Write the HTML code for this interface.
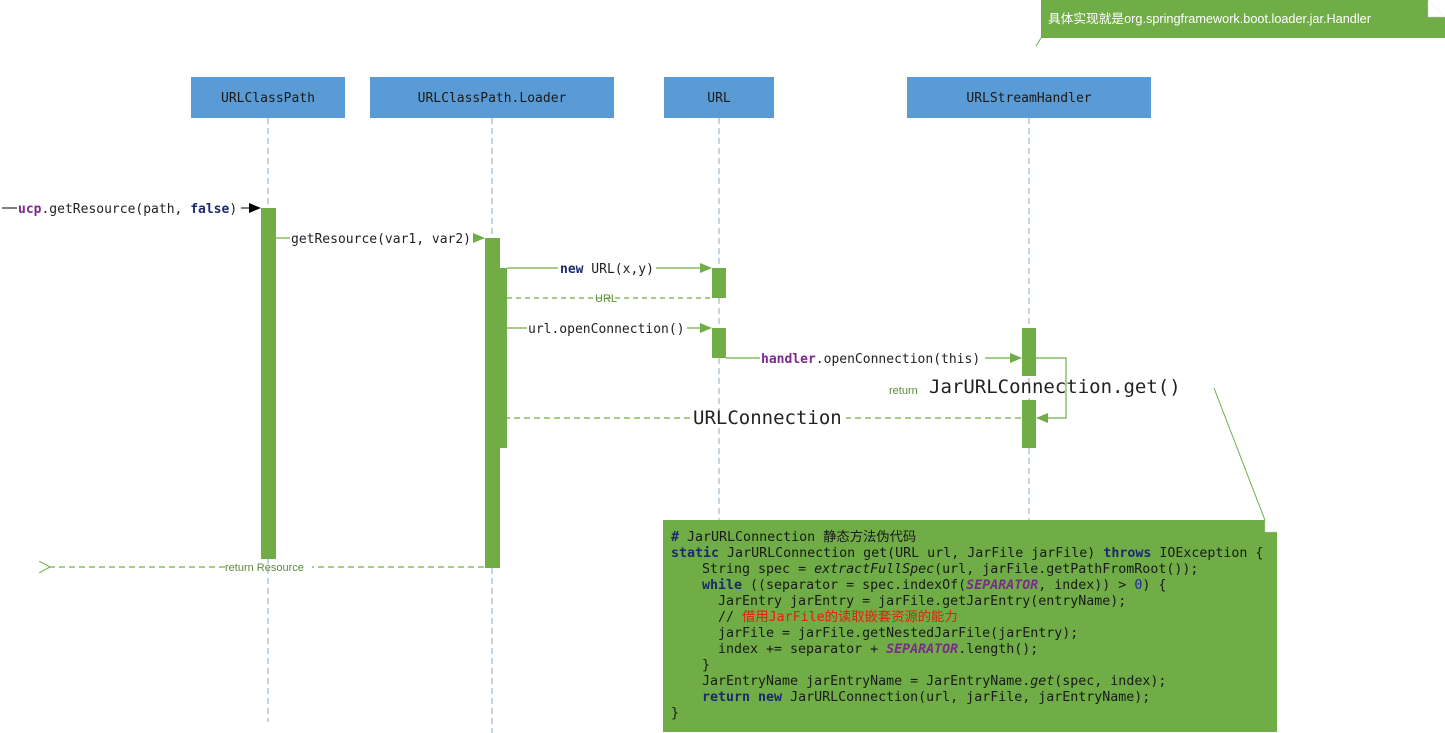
<!DOCTYPE html>
<html><head><meta charset="utf-8"><style>
body{margin:0;background:#fff;width:1445px;height:733px;overflow:hidden}
svg{display:block}
.m{font-family:"DejaVu Sans Mono","Liberation Mono","Noto Sans CJK SC",monospace}
.s{font-family:"Liberation Sans","Noto Sans CJK SC",sans-serif}
.pre text{white-space:pre}
</style></head><body>
<svg width="1445" height="733" xmlns="http://www.w3.org/2000/svg">
<defs>
<marker id="a" markerWidth="12" markerHeight="10" refX="11" refY="5" orient="auto" markerUnits="userSpaceOnUse"><path d="M0,0L12,5L0,10z" fill="#70ad47"/></marker>
<marker id="k" markerWidth="12" markerHeight="10" refX="11" refY="5" orient="auto" markerUnits="userSpaceOnUse"><path d="M0,0L12,5L0,10z" fill="#000"/></marker>
<marker id="o" markerWidth="12" markerHeight="12" refX="1" refY="6" orient="auto" markerUnits="userSpaceOnUse"><path d="M12,0L1,6L12,12" fill="none" stroke="#70ad47"/></marker>
</defs>
<g stroke="#8aa9c0" stroke-dasharray="6,4" stroke-width="1">
<line x1="268" y1="118" x2="268" y2="722"/><line x1="492" y1="118" x2="492" y2="733"/>
<line x1="719" y1="118" x2="719" y2="520"/><line x1="1029" y1="118" x2="1029" y2="520"/>
</g>
<g fill="#5b9bd5">
<rect x="191" y="77" width="154" height="41"/><rect x="370" y="77" width="244" height="41"/>
<rect x="664" y="77" width="110" height="41"/><rect x="907" y="77" width="244" height="41"/>
</g>
<g class="m" font-size="13" fill="#1a1a1a" text-anchor="middle">
<text x="268" y="102">URLClassPath</text><text x="492" y="102">URLClassPath.Loader</text>
<text x="719" y="102">URL</text><text x="1029" y="102">URLStreamHandler</text>
</g>
<g fill="#70ad47">
<rect x="261" y="208" width="15" height="351"/>
<rect x="485" y="238" width="15" height="330"/>
<rect x="492" y="268" width="15" height="180"/>
<rect x="712" y="268" width="14" height="30"/>
<rect x="712" y="328" width="14" height="30"/>
<rect x="1022" y="328" width="14" height="48"/>
<rect x="1022" y="400" width="14" height="48"/>
</g>
<g stroke="#70ad47" fill="none" stroke-width="1.2">
<line x1="276" y1="238" x2="290" y2="238"/><line x1="474" y1="238" x2="484" y2="238" marker-end="url(#a)"/>
<line x1="507" y1="268" x2="558" y2="268"/><line x1="656" y1="268" x2="711" y2="268" marker-end="url(#a)"/>
<line x1="710" y1="298" x2="502" y2="298" stroke-dasharray="5,4" marker-end="url(#o)"/>
<line x1="507" y1="328" x2="527" y2="328"/><line x1="687" y1="328" x2="711" y2="328" marker-end="url(#a)"/>
<line x1="726" y1="358" x2="760" y2="358"/><line x1="985" y1="358" x2="1021" y2="358" marker-end="url(#a)"/>
<polyline points="1036,358 1066,358 1066,418 1037,418" marker-end="url(#a)"/>
<line x1="1021" y1="418" x2="846" y2="418" stroke-dasharray="6,4"/>
<line x1="690" y1="418" x2="506" y2="418" stroke-dasharray="6,4" marker-end="url(#o)"/>
<line x1="484" y1="567" x2="312" y2="567" stroke-dasharray="6,4"/>
<line x1="225" y1="567" x2="50" y2="567" stroke-dasharray="6,4" marker-end="url(#o)"/>
</g>
<line x1="2" y1="208" x2="17" y2="208" stroke="#000"/>
<line x1="241" y1="208" x2="260" y2="208" stroke="#000" marker-end="url(#k)"/>
<g class="m" font-size="13" fill="#222">
<text x="18" y="213"><tspan fill="#7a2b8c" font-weight="bold">ucp</tspan>.getResource(path, <tspan fill="#1a2a6e" font-weight="bold">false</tspan>)</text>
<text x="291" y="243">getResource(var1, var2)</text>
<text x="560" y="273"><tspan fill="#1a2a6e" font-weight="bold">new</tspan> URL(x,y)</text>
<text x="528" y="333">url.openConnection()</text>
<text x="761" y="363"><tspan fill="#7a2b8c" font-weight="bold">handler</tspan>.openConnection(this)</text>
<text x="929" y="393" font-size="19">JarURLConnection.get()</text>
<text x="693" y="424" font-size="19">URLConnection</text>
</g>
<g class="s" font-size="11" fill="#5a8a3a">
<text x="595" y="302">URL</text><text x="889" y="394">return</text><text x="225" y="571">return Resource</text>
</g>
<path d="M1041,0H1428L1445,17V38H1041Z" fill="#70ad47"/>
<path d="M1428,0V17H1445" fill="#fff" stroke="#ccc" stroke-width="0.5"/>
<line x1="1041" y1="38" x2="1036" y2="46" stroke="#70ad47"/>
<text x="1048" y="23" class="s" font-size="12.7" fill="#fff">具体实现就是org.springframework.boot.loader.jar.Handler</text>
<line x1="1214" y1="388" x2="1268" y2="528" stroke="#70ad47"/>
<path d="M663,520H1265L1277,532V732H663Z" fill="#70ad47"/>
<path d="M1265,520V532H1277" fill="#fff" stroke="#ccc" stroke-width="0.5"/>
<g class="m pre" font-size="13.3" fill="#1a1a1a">
<text x="671" y="541"><tspan fill="#1a2a6e" font-weight="bold">#</tspan> JarURLConnection 静态方法伪代码</text>
<text x="671" y="557"><tspan fill="#1a2a6e" font-weight="bold">static</tspan> JarURLConnection get(URL url, JarFile jarFile) <tspan fill="#1a2a6e" font-weight="bold">throws</tspan> IOException {</text>
<text x="702" y="573">String spec = <tspan font-style="italic">extractFullSpec</tspan>(url, jarFile.getPathFromRoot());</text>
<text x="702" y="589"><tspan fill="#1a2a6e" font-weight="bold">while</tspan> ((separator = spec.indexOf(<tspan fill="#7a2b8c" font-style="italic" font-weight="bold">SEPARATOR</tspan>, index)) &gt; <tspan fill="#1a2a9e">0</tspan>) {</text>
<text x="718" y="605">JarEntry jarEntry = jarFile.getJarEntry(entryName);</text>
<text x="718" y="621">// <tspan fill="#e02010">借用JarFile的读取嵌套资源的能力</tspan></text>
<text x="718" y="637">jarFile = jarFile.getNestedJarFile(jarEntry);</text>
<text x="718" y="653">index += separator + <tspan fill="#7a2b8c" font-style="italic" font-weight="bold">SEPARATOR</tspan>.length();</text>
<text x="702" y="669">}</text>
<text x="702" y="685">JarEntryName jarEntryName = JarEntryName.<tspan font-style="italic">get</tspan>(spec, index);</text>
<text x="702" y="701"><tspan fill="#1a2a6e" font-weight="bold">return new</tspan> JarURLConnection(url, jarFile, jarEntryName);</text>
<text x="671" y="717">}</text>
</g>
</svg>
</body></html>
